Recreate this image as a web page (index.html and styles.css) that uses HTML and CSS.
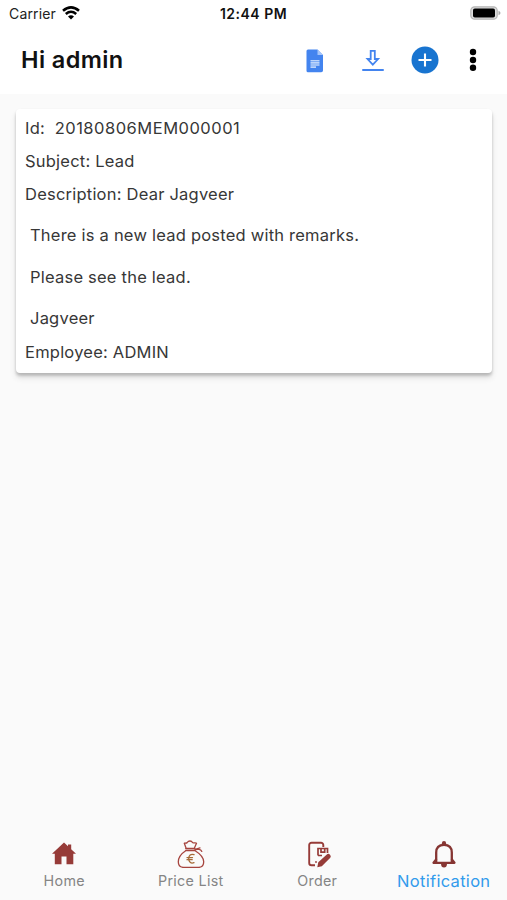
FILE: index.html
```html
<!DOCTYPE html>
<html lang="en">
<head>
<meta charset="utf-8">
<title>Notifications</title>
<link rel="stylesheet" href="styles.css">
</head>
<body>
<div class="app">
  <header class="header">
    <div class="status">
      <div class="carrier"><span>Carrier</span>
        <svg width="18" height="14" viewBox="0 0 18 14" fill="none" stroke="#000" stroke-width="2.600"><path d="M1 4.800Q9-2 17 4.800M3.800 7.900Q9 3.600 14.200 7.900"/><path d="M9 13.500 6 10.400Q9 8.100 12 10.400Z" fill="#000" stroke="none"/></svg>
      </div>
      <div class="time">12:44 PM</div>
      <svg class="battery" width="31" height="14" viewBox="0 0 31 14"><rect x=".8" y=".8" width="26.400" height="12.400" rx="3.800" fill="#ddd" stroke="#b5b5b5" stroke-width="1.200"/><rect x="3" y="2.400" width="22" height="9.200" rx="1.800"/><path d="M28.500 4.800Q30.500 5.500 30.500 7T28.500 9.200Z" fill="#aaa"/></svg>
    </div>
    <div class="toolbar">
      <h1>Hi admin</h1>
      <svg class="doc" width="18" height="24" viewBox="0 0 18 24"><path d="M2 .5h9.500l5.500 5.500v15.500a1.800 1.800 0 0 1-1.800 1.800H2A1.500 1.500 0 0 1 .5 21.800V2A1.500 1.500 0 0 1 2 .5Z" fill="#4384ef"/><path d="M11.500.5 17 6h-5.500Z" fill="#a5c5fa"/><path d="M4.500 11.800h9M4.500 13.900h9M4.500 16h9M4.500 18.100h5.500" stroke="#bdd5fb" stroke-width="1.600"/></svg>
      <svg class="download" width="22" height="23" viewBox="0 0 22 23" fill="none" stroke="#4384ef" stroke-width="1.800"><path d="M8.700 1.800h4.100v8.200h3.300L10.800 15.700 5.500 10h3.200Z"/><path d="M1 21h20" stroke-width="2" stroke-linecap="round"/></svg>
      <svg class="add" width="28" height="28" viewBox="0 0 28 28"><circle cx="14" cy="14" r="13.500" fill="#1874d0"/><path d="M7.500 14h13M14 7.500v13" stroke="#fff" stroke-width="2.100"/></svg>
      <svg class="more" width="8" height="24" viewBox="0 0 8 24"><circle cx="4" cy="4" r="3.200"/><circle cx="4" cy="12" r="3.200"/><circle cx="4" cy="19.800" r="3.200"/></svg>
    </div>
  </header>
  <main>
    <article class="card">
      <p class="id">Id:&nbsp; <span>20180806MEM000001</span></p>
      <p class="subject">Subject: Lead</p>
      <p class="description">Description: Dear Jagveer</p>
      <div class="message">
        <p class="remark">There is a new lead posted with remarks.</p>
        <p>Please see the lead.</p>
        <p>Jagveer</p>
      </div>
      <p class="employee">Employee: ADMIN</p>
    </article>
  </main>
  <nav>
    <a class="tab"><svg width="28" height="28" viewBox="0 0 28 28"><path d="M14 2.500 18 6.300V4.500h3.200v4.800L26 13.800h-2.700V24.300h-6.800v-7.700h-5v7.700H4.800V13.800H2Z" fill="#963b38"/></svg><span>Home</span></a>
    <a class="tab price"><svg width="28" height="28" viewBox="0 0 28 28" fill="none" stroke="#a6443e" stroke-width="1.300" stroke-linecap="round" stroke-linejoin="round"><path d="M9.200 8.500 7.300 3.200C8.500 2.500 9 4 10.200 2.500 11.500.5 14.500.5 15.500 2.500c1.500 1 3-.2 4 .7l-2.300 5.300M8.700 8.500h9.100M8.700 10.500h9.100M9 10.500C4.500 13.500 1.300 17.300 1.300 21.800c0 3.300 2 5.600 5.400 5.600h14.700c3.400 0 5.300-2.300 5.300-5.600 0-4.400-3.600-8-8.900-11.300M18 9.300l5-1.400M18.300 9.700c2-.8 5.500-.7 6.500 1.700"/><path d="M17 14.700c-3.200-1.300-5.300.9-5.300 4s2.100 5.300 5.300 4M10 17.600h5.500M10 19.700h5.200" stroke="#a56a37"/></svg><span>Price List</span></a>
    <a class="tab order"><svg width="28" height="28" viewBox="0 0 28 28"><path d="M10 25.300H6.500a2.300 2.300 0 0 1-2.300-2.300V5A2.300 2.300 0 0 1 6.500 2.700H16a2.300 2.300 0 0 1 2.300 2.300v2" fill="none" stroke="#963b38" stroke-width="1.900"/><path d="M13 15.500V8.500h9.500v4.600M16 8.500v3.700h3.700V8.500M13 15.500h4" fill="none" stroke="#963b38" stroke-width="1.700"/><path d="m12.300 27.300 1-5.100 8.800-8q1.500-.9 2.900.6 1.500 1.600.3 3l-8.500 8.400Z" fill="#963b38"/><circle cx="11" cy="22" r=".9" fill="#963b38"/></svg><span>Order</span></a>
    <a class="tab active"><svg width="28" height="28" viewBox="0 0 28 28"><path d="M6.200 22.300V12.500C6.200 7.500 9.200 4.800 14 4.800s7.800 2.700 7.800 7.700v9.800" fill="none" stroke="#863532" stroke-width="2.300"/><path d="m6.500 19-3 3.800h21l-3-3.800" fill="none" stroke="#863532" stroke-width="2.200" stroke-linejoin="round"/><circle cx="14" cy="3.200" r="2.100" fill="#863532"/><path d="M11 24h6q-.2 3.600-3 3.600T11 24Z" fill="#863532"/></svg><span>Notification</span></a>
  </nav>
</div>
</body>
</html>
```
FILE: styles.css
```css
* { box-sizing: border-box; }
body { margin: 0; font-family: Inter, "Liberation Sans", sans-serif; color: #373737; background: #fafafa; }
svg { display: block; flex: none; }
h1, p { margin: 0; white-space: nowrap; }
.app { width: 507px; height: 900px; display: flex; flex-direction: column; }
.header { height: 94px; background: #fff; }
.status { height: 28px; padding: 0 6px 2px 9px; display: grid; grid-template-columns: 1fr auto 1fr; align-items: center; color: #222; }
.carrier { display: flex; align-items: center; gap: 6px; font-size: 14px; letter-spacing: .15px; }
.carrier svg { margin-top: 0; }
.time { padding-right: 3px; font-size: 14px; font-weight: 600; letter-spacing: .5px; color: #111; }
.battery { justify-self: end; }
.toolbar { height: 64px; padding-left: 21px; display: flex; align-items: center; }
h1 { width: 285px; font-size: 23.5px; font-weight: 600; line-height: 28px; letter-spacing: .4px; color: #111; }
.doc { margin-top: 2px; }
.download { margin-left: 38px; margin-top: 1px; }
.add { margin-left: 27px; }
.more { margin-left: 29.5px; }
main { flex: 1; padding: 15px 15px 0 16px; }
.card { height: 264px; padding: 3px 9px; border-radius: 4px; background: #fff; font-size: 16.5px; line-height: 33px; letter-spacing: .22px; box-shadow: 0 3px 3px rgba(0,0,0,.16), 0 5px 6px rgba(0,0,0,.1), 0 1px 3px rgba(0,0,0,.06); }
.id span { letter-spacing: .5px; }
.message { padding: 4px 0 4px 5px; line-height: 41.5px; }
.employee { margin-top: -8px; }
nav { height: 64px; padding-left: 1px; display: grid; grid-template-columns: repeat(4, 126.5px); }
.tab { display: flex; flex-direction: column; align-items: center; padding-top: 4px; font-size: 14.3px; line-height: 18px; letter-spacing: .3px; color: #858585; }
.tab span { margin-top: 4px; white-space: nowrap; }
.order svg { margin-left: 4px; }
.active { color: #329bec; font-size: 16.5px; }
```
